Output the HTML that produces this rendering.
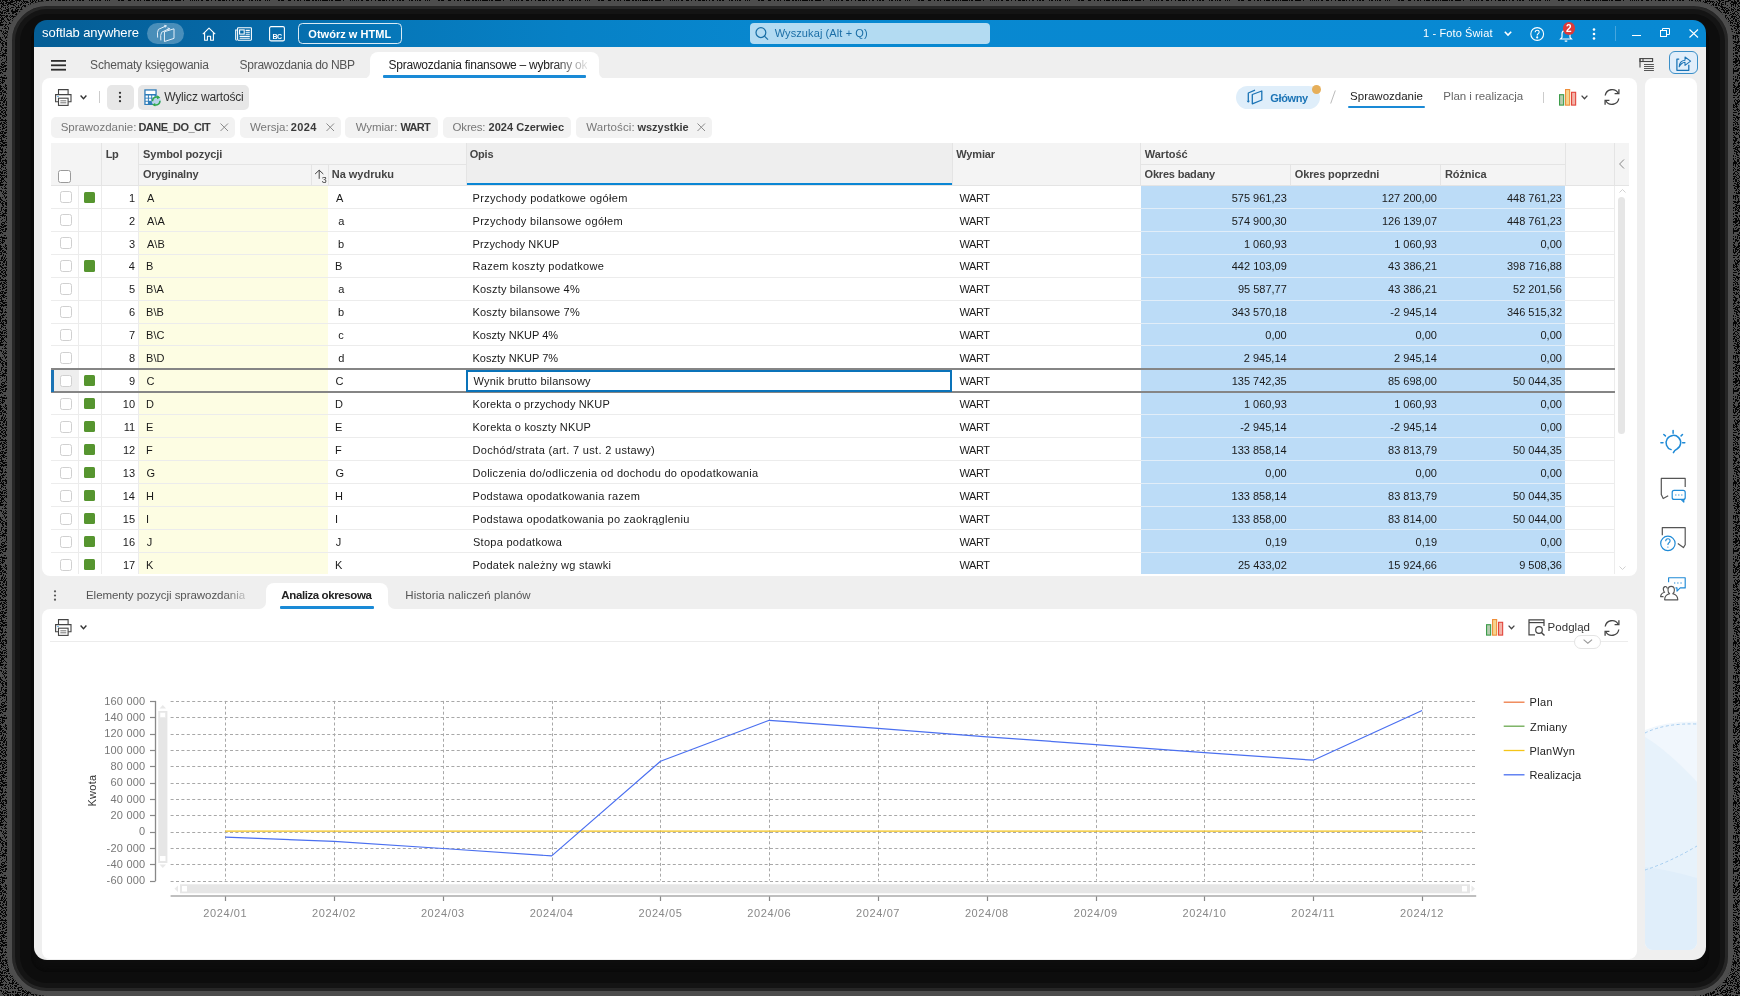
<!DOCTYPE html>
<html><head><meta charset="utf-8"><title>softlab anywhere</title>
<style>
*{box-sizing:border-box;margin:0;padding:0}
html,body{width:1740px;height:996px;overflow:hidden}
body{background:#050505;font-family:"Liberation Sans",sans-serif;position:relative;color:#222}
.a{position:absolute}
.t{position:absolute;white-space:pre}
svg{position:absolute;overflow:visible}
#ring{position:absolute;left:6.5px;top:0.5px;width:1726.5px;height:995.5px;border:5.8px solid #4d4d4d;border-radius:40px;background:#0d0d0d;box-shadow:inset 0 0 0 3px #262626, inset 0 0 0 8px #141414, inset 0 0 0 19px #0d0d0d, inset 0 0 6px 20px #080808}
#win{position:absolute;left:0;top:0;width:1740px;height:996px;will-change:transform;clip-path:inset(20px 34px 36px 34px round 13px);background:#efefef}
#title{position:absolute;left:34px;top:20px;width:1672px;height:27px;background:linear-gradient(90deg,#055e96 0%,#0668a6 12%,#0678ba 22%,#0781c6 32%,#0888d0 45%,#0889d3 100%)}
.panel{position:absolute;background:#fff;border-radius:8px}
.chip{position:absolute;top:117px;height:20.5px;background:#f2f2f2;border-radius:5px}
</style></head><body>
<svg style="left:0;top:0" width="1740" height="996"><filter id="nz" x="0" y="0" width="100%" height="100%" color-interpolation-filters="sRGB"><feTurbulence type="fractalNoise" baseFrequency="1.6" numOctaves="1" seed="7"/><feColorMatrix type="matrix" values="0 0 0 0 0.302 0 0 0 0 0.302 0 0 0 0 0.302 1 0 0 0 0"/><feComponentTransfer><feFuncA type="discrete" tableValues="0 0 1 1"/></feComponentTransfer></filter><rect x="0" y="0" width="1740" height="996" filter="url(#nz)"/></svg>
<div id="ring"></div>
<div id="win">

<div id="title"></div>
<div class="t" style="left:42.10px;top:24.60px;font-size:13px;line-height:16px;color:#fff;letter-spacing:-0.097px">softlab anywhere</div>
<div class="a" style="left:147px;top:23px;width:37px;height:21px;border-radius:11px;background:rgba(255,255,255,0.27)"></div>
<svg style="left:156px;top:25px" width="19" height="17" viewBox="0 0 19 17" fill="none" stroke="#e3eef8" stroke-width="1" stroke-linejoin="round" stroke-linecap="round">
<path d="M1.6 12.2 Q0.9 7 2.4 4.4 L10 0.9"/><path d="M8.6 0.4 L10.3 0.8 L9.4 2.2"/><path d="M4.8 15 Q4.1 9.6 5.6 7.3 L13.3 3.6"/><path d="M11.9 3.1 L13.6 3.5 L12.7 4.9"/><path d="M8.8 6.6 L18 3.8 V13.4 L8.8 16.4 Z"/></svg>
<svg style="left:202px;top:27px" width="14" height="14" viewBox="0 0 14 14" fill="none" stroke="#fff" stroke-width="1.1" stroke-linejoin="round">
<path d="M0.8 7.2 L7 1.1 L13.2 7.2"/><path d="M2.6 5.6 V13.2 H5.4 V9.2 H8.6 V13.2 H11.4 V5.6"/></svg>
<svg style="left:235px;top:27px" width="17" height="14" viewBox="0 0 17 14" fill="none" stroke="#fff" stroke-width="1.1">
<rect x="2.6" y="0.7" width="13.8" height="12.5" rx="0.6"/><path d="M2.6 3 H0.7 V12.3 Q0.7 13.2 1.8 13.2"/><rect x="4.6" y="2.9" width="4.6" height="4.2"/><path d="M10.6 3.4 H14.8 M10.6 5.3 H14.8 M10.6 7.2 H14.8 M4.6 9.4 H14.8 M4.6 11.2 H14.8"/></svg>
<svg style="left:269px;top:26.3px" width="16" height="15.5" viewBox="0 0 16 15.5" fill="none" stroke="#fff" stroke-width="1.1">
<rect x="0.6" y="0.6" width="14.8" height="14.3" rx="1.5"/></svg>
<div class="t" style="left:272.45px;top:31.50px;font-size:7px;line-height:9px;color:#fff;font-weight:700;letter-spacing:-0.405px">BC</div>
<div class="a" style="left:298px;top:22.8px;width:104px;height:21.5px;border:1.3px solid rgba(255,255,255,0.85);border-radius:4.5px"></div>
<div class="t" style="left:308.35px;top:27.00px;font-size:11px;line-height:14px;color:#fff;font-weight:700;letter-spacing:0.023px">Otwórz w HTML</div>
<div class="a" style="left:749.7px;top:22.5px;width:240px;height:21.7px;border-radius:4px;background:#b3dbf2"></div>
<svg style="left:755px;top:27px" width="14" height="13" viewBox="0 0 14 13" fill="none" stroke="#1a6fa6" stroke-width="1.25">
<circle cx="5.9" cy="5.6" r="4.9"/><path d="M9.4 9.1 L13 12.6"/></svg>
<div class="t" style="left:774.70px;top:26.10px;font-size:11px;line-height:14px;color:#1b6ea6;letter-spacing:0.099px">Wyszukaj (Alt + Q)</div>
<div class="t" style="left:1423.00px;top:26.00px;font-size:11px;line-height:14px;color:#fff;letter-spacing:0.123px">1 - Foto Świat</div>
<svg style="left:1504.3px;top:30.5px" width="8" height="5" viewBox="0 0 8 5" fill="none" stroke="#fff" stroke-width="1.6"><path d="M0.8 0.8 L4 4 L7.2 0.8"/></svg>
<svg style="left:1530px;top:27px" width="14.5" height="14" viewBox="0 0 14.5 14" fill="none" stroke="#fff" stroke-width="1.1">
<circle cx="7.2" cy="7" r="6.4"/><path d="M5.2 5.3 Q5.2 3.3 7.2 3.3 Q9.2 3.3 9.2 5.1 Q9.2 6.3 7.9 6.9 Q7.2 7.3 7.2 8.5"/><circle cx="7.2" cy="10.4" r="0.5" fill="#fff"/></svg>
<svg style="left:1558.5px;top:28px" width="14" height="14" viewBox="0 0 14 14" fill="none" stroke="#fff" stroke-width="1.2">
<path d="M1.5 11 H12.5 L11 9.3 V6 Q11 2.4 7 2.4 Q3 2.4 3 6 V9.3 Z"/><path d="M5.8 12.6 Q7 13.9 8.2 12.6"/></svg>
<div class="a" style="left:1562.7px;top:22px;width:12.6px;height:12.6px;border-radius:50%;background:#db3a3a"></div>
<div class="t" style="left:1566.10px;top:23.20px;font-size:10px;line-height:12px;color:#fff;font-weight:700">2</div>
<svg style="left:1592px;top:28px" width="4" height="12" viewBox="0 0 4 12" fill="#fff"><circle cx="2" cy="1.5" r="1.3"/><circle cx="2" cy="6" r="1.3"/><circle cx="2" cy="10.5" r="1.3"/></svg>
<div class="a" style="left:1614.5px;top:26px;width:1px;height:15px;background:rgba(255,255,255,0.25)"></div>
<div class="a" style="left:1631.5px;top:34.6px;width:9.5px;height:1.2px;background:#fff"></div>
<svg style="left:1660px;top:28px" width="10" height="9" viewBox="0 0 10 9" fill="none" stroke="#fff" stroke-width="1"><rect x="0.5" y="2.5" width="6" height="6"/><path d="M2.5 2.5 V0.5 H9.5 V6.5 H6.5"/></svg>
<svg style="left:1688.5px;top:28.5px" width="9.5" height="9" viewBox="0 0 9.5 9" fill="none" stroke="#fff" stroke-width="1.1"><path d="M0.5 0.5 L9 8.5 M9 0.5 L0.5 8.5"/></svg>
<svg style="left:50.5px;top:59.5px" width="15" height="11" viewBox="0 0 15 11" fill="#2e2e2e"><rect x="0" y="0" width="15" height="1.8"/><rect x="0" y="4.4" width="15" height="1.8"/><rect x="0" y="8.8" width="15" height="1.8"/></svg>
<div class="t" style="left:90.10px;top:58.30px;font-size:12px;line-height:15px;color:#555;letter-spacing:-0.203px">Schematy księgowania</div>
<div class="t" style="left:239.60px;top:58.30px;font-size:12px;line-height:15px;color:#555;letter-spacing:-0.296px">Sprawozdania do NBP</div>
<div class="a" style="left:362px;top:70px;width:245px;height:9px;background:#fff"></div>
<div class="a" style="left:360px;top:68px;width:10px;height:10.5px;background:#efefef;border-radius:0 0 7px 0"></div>
<div class="a" style="left:599px;top:68px;width:10px;height:10.5px;background:#efefef;border-radius:0 0 0 7px"></div>
<div class="a" style="left:370px;top:52.2px;width:229px;height:26px;background:#fff;border-radius:8px 8px 0 0"></div>
<div class="t" style="left:388.60px;top:58.30px;font-size:12px;line-height:15px;color:#222;width:198px;overflow:hidden;letter-spacing:-0.25px;-webkit-mask-image:linear-gradient(90deg,#000 83%,rgba(0,0,0,0.12) 100%)">Sprawozdania finansowe – wybrany okres</div>
<div class="a" style="left:383.3px;top:75.2px;width:203px;height:2.4px;background:#1a8ad6;border-radius:1px"></div>
<svg style="left:1639px;top:57px" width="16" height="15" viewBox="0 0 16 15" fill="none" stroke="#444" stroke-width="1.1">
<path d="M1 1.3 V10.4"/><rect x="1" y="1.6" width="12.6" height="2.9"/><path d="M4 1.6 V4.5"/><path d="M5 7.5 H14.9 M5 9.5 H14.9 M5 11.5 H14.9 M5 13.5 H14.9" stroke="#555" stroke-width="1"/></svg>
<div class="a" style="left:1669px;top:51.2px;width:28.6px;height:23.3px;border:1.2px solid #3b8fc8;border-radius:6px;background:#e1eefa"></div>
<svg style="left:1676px;top:56px" width="16" height="16" viewBox="0 0 16 16" fill="none" stroke="#1a73b5" stroke-width="1.25" stroke-linejoin="round">
<path d="M3.2 3 H0.9 V14.3 H12.8 V8.7"/><path d="M3.2 10.8 Q3.5 4.8 9 4.3 L9 1 L14.6 5.2 L9 9.4 L9 6.3 Q5.5 6.5 3.2 10.8 Z" stroke-width="1.05"/></svg>
<div class="panel" style="left:42px;top:78px;width:1595px;height:498px"></div>
<svg style="left:54.8px;top:88.7px" width="17" height="17" viewBox="0 0 17 17" fill="none" stroke="#444" stroke-width="1.1">
<path d="M3.5 5.5 V0.6 H13.1 V5.5"/><path d="M3.5 12.8 H0.6 V5.6 H16 V12.8 H13.1"/><rect x="3.5" y="9.2" width="9.6" height="7.2" fill="#fff"/><path d="M5.3 11.8 H11.3 M5.3 13.8 H11.3" stroke="#666" stroke-width="0.9"/><path d="M2.4 7.5 H3.6" stroke="#2a8ad6" stroke-width="1.1"/></svg>
<svg style="left:80px;top:95px" width="7" height="4.5" viewBox="0 0 7 4.5" fill="none" stroke="#333" stroke-width="1.4"><path d="M0.6 0.6 L3.5 3.7 L6.4 0.6"/></svg>
<div class="a" style="left:99px;top:91px;width:1px;height:12px;background:#ccc"></div>
<div class="a" style="left:107px;top:85px;width:27px;height:24.5px;border-radius:5px;background:#e7e7e7"></div>
<svg style="left:118.1px;top:90.8px" width="4" height="12" viewBox="0 0 4 12" fill="#333"><circle cx="2" cy="1.8" r="1.15"/><circle cx="2" cy="6" r="1.15"/><circle cx="2" cy="10.2" r="1.15"/></svg>
<div class="a" style="left:138px;top:85px;width:111px;height:24.5px;border-radius:5px;background:#e7e7e7"></div>
<svg style="left:144px;top:88.6px" width="18" height="17" viewBox="0 0 18 17" fill="none">
<rect x="0.3" y="0.3" width="12.4" height="15.7" fill="#2f7db9"/><rect x="1.6" y="1.6" width="9.8" height="3.4" fill="#fff"/>
<rect x="1.6" y="6.5" width="2.3" height="2.2" fill="#fff"/><rect x="4.9" y="6.5" width="2.3" height="2.2" fill="#fff"/><rect x="8.2" y="6.5" width="2.3" height="2.2" fill="#fff"/>
<rect x="1.6" y="9.6" width="2.3" height="2.2" fill="#fff"/><rect x="1.6" y="12.7" width="2.3" height="2.2" fill="#fff"/><rect x="4.9" y="9.6" width="2.3" height="2.2" fill="#fff"/>
<circle cx="12.2" cy="12" r="4.6" fill="#b9d3ea"/>
<path d="M8.5 12.2 Q8.6 8.3 12.4 7.9 L14.4 8.1" stroke="#2fa84a" stroke-width="1.5"/><path d="M13.2 6.2 L16.3 8.4 L13 10.3Z" fill="#2fa84a"/><path d="M16 11.8 Q15.8 15.8 12 16.1 L10 15.9" stroke="#2fa84a" stroke-width="1.5"/><path d="M11.2 14 L8 15.8 L11.3 17.5Z" fill="#2fa84a"/></svg>
<div class="t" style="left:164.15px;top:90.30px;font-size:12px;line-height:15px;color:#333;letter-spacing:-0.163px">Wylicz wartości</div>
<div class="a" style="left:1236px;top:85.8px;width:83.5px;height:23.2px;border-radius:12px;background:#dfeefa"></div>
<svg style="left:1247px;top:89px" width="16" height="16" viewBox="0 0 16 16" fill="none" stroke="#1a73b5" stroke-width="1.3" stroke-linejoin="round">
<path d="M1.3 13 V4 L8 1.2"/><path d="M0.3 11.8 L1.3 13.3 L2.4 11.8" stroke-width="1"/><path d="M5.3 5.5 L14.8 2 V11 L5.3 14.8 Z"/></svg>
<div class="t" style="left:1270.35px;top:91.00px;font-size:11px;line-height:14px;color:#1a73b5;font-weight:700;letter-spacing:-0.371px">Główny</div>
<div class="a" style="left:1311.7px;top:84.9px;width:9px;height:9px;border-radius:50%;background:#e6af5a"></div>
<svg style="left:1330px;top:90px" width="6" height="14" viewBox="0 0 6 14" fill="none" stroke="#bbb" stroke-width="1"><path d="M5.3 0.5 L0.7 13.5"/></svg>
<div class="t" style="left:1350.10px;top:88.90px;font-size:11.5px;line-height:14px;color:#222;letter-spacing:-0.008px">Sprawozdanie</div>
<div class="a" style="left:1348.2px;top:105.8px;width:76.5px;height:2.5px;background:#1a8ad6;border-radius:1px"></div>
<div class="t" style="left:1443.30px;top:88.90px;font-size:11.5px;line-height:14px;color:#666;letter-spacing:-0.046px">Plan i realizacja</div>
<div class="a" style="left:1542.5px;top:91.5px;width:1px;height:11.5px;background:#ccc"></div>
<svg style="left:1559px;top:89px" width="17" height="17" viewBox="0 0 17 17" fill="none" stroke-width="1.1">
<rect x="0.55" y="5.7" width="4.1" height="10.4" stroke="#3c9c4a" fill="#b5cdb0"/><rect x="6.55" y="0.55" width="4.1" height="15.6" stroke="#ef8f3a" fill="#f5d48e"/><rect x="12.55" y="3.3" width="4.1" height="12.8" stroke="#e2453b" fill="#f3b3a8"/></svg>
<svg style="left:1581px;top:95px" width="7" height="4.5" viewBox="0 0 7 4.5" fill="none" stroke="#444" stroke-width="1.3"><path d="M0.6 0.6 L3.5 3.7 L6.4 0.6"/></svg>
<svg style="left:1603px;top:88px" width="18" height="18" viewBox="0 0 18 18" fill="none" stroke="#444" stroke-width="1.3">
<path d="M2.2 7.5 A7 7 0 0 1 15.2 5.2"/><path d="M15.9 1.2 V5.6 H11.6"/><path d="M15.8 10.5 A7 7 0 0 1 2.8 12.8"/><path d="M2.1 16.8 V12.4 H6.4"/></svg>
<div class="chip" style="left:50.9px;width:183.9px"></div>
<div class="t" style="left:60.70px;top:120.40px;font-size:11.5px;line-height:14px;color:#777;letter-spacing:-0.036px">Sprawozdanie:</div>
<div class="t" style="left:138.40px;top:120.40px;font-size:11px;line-height:14px;color:#3a3a3a;font-weight:700;letter-spacing:-0.525px">DANE_DO_CIT</div>
<svg style="left:219.8px;top:123.3px" width="8.5" height="8.5" viewBox="0 0 8.5 8.5" fill="none" stroke="#8a8a8a" stroke-width="1"><path d="M0.5 0.5 L8 8 M8 0.5 L0.5 8"/></svg>
<div class="chip" style="left:239.9px;width:100.70000000000002px"></div>
<div class="t" style="left:249.95px;top:120.40px;font-size:11.5px;line-height:14px;color:#777;letter-spacing:-0.012px">Wersja:</div>
<div class="t" style="left:290.65px;top:120.40px;font-size:11px;line-height:14px;color:#3a3a3a;font-weight:700;letter-spacing:0.432px">2024</div>
<svg style="left:325.5px;top:123.3px" width="8.5" height="8.5" viewBox="0 0 8.5 8.5" fill="none" stroke="#8a8a8a" stroke-width="1"><path d="M0.5 0.5 L8 8 M8 0.5 L0.5 8"/></svg>
<div class="chip" style="left:344.8px;width:93.5px"></div>
<div class="t" style="left:355.65px;top:120.40px;font-size:11.5px;line-height:14px;color:#777;letter-spacing:-0.061px">Wymiar:</div>
<div class="t" style="left:400.50px;top:120.40px;font-size:11px;line-height:14px;color:#3a3a3a;font-weight:700;letter-spacing:-0.738px">WART</div>
<div class="chip" style="left:442.6px;width:128.39999999999998px"></div>
<div class="t" style="left:452.60px;top:120.40px;font-size:11.5px;line-height:14px;color:#777;letter-spacing:-0.184px">Okres:</div>
<div class="t" style="left:488.55px;top:120.40px;font-size:11px;line-height:14px;color:#3a3a3a;font-weight:700;letter-spacing:0.029px">2024 Czerwiec</div>
<div class="chip" style="left:575.8px;width:136.5px"></div>
<div class="t" style="left:586.25px;top:120.40px;font-size:11.5px;line-height:14px;color:#777;letter-spacing:0.125px">Wartości:</div>
<div class="t" style="left:637.45px;top:120.40px;font-size:11px;line-height:14px;color:#3a3a3a;font-weight:700;letter-spacing:-0.018px">wszystkie</div>
<svg style="left:697px;top:123.3px" width="8.5" height="8.5" viewBox="0 0 8.5 8.5" fill="none" stroke="#8a8a8a" stroke-width="1"><path d="M0.5 0.5 L8 8 M8 0.5 L0.5 8"/></svg>
<div class="a" style="left:50.5px;top:143.4px;width:1578.3px;height:42.099999999999994px;background:#f4f4f4"></div>
<div class="a" style="left:466px;top:143.4px;width:486.3px;height:42.099999999999994px;background:#eeeeee"></div>
<div class="a" style="left:466px;top:182.9px;width:486.3px;height:2.4px;background:#0a86d4"></div>
<div class="a" style="left:50.5px;top:185.0px;width:1578.3px;height:1px;background:#e4e4e4"></div>
<div class="a" style="left:100.9px;top:143.4px;width:1px;height:42.099999999999994px;background:#e4e4e4"></div>
<div class="a" style="left:137.9px;top:143.4px;width:1px;height:42.099999999999994px;background:#e4e4e4"></div>
<div class="a" style="left:465.5px;top:143.4px;width:1px;height:42.099999999999994px;background:#e4e4e4"></div>
<div class="a" style="left:951.8px;top:143.4px;width:1px;height:42.099999999999994px;background:#e4e4e4"></div>
<div class="a" style="left:1140.2px;top:143.4px;width:1px;height:42.099999999999994px;background:#e4e4e4"></div>
<div class="a" style="left:1565.0px;top:143.4px;width:1px;height:42.099999999999994px;background:#e4e4e4"></div>
<div class="a" style="left:1614.0px;top:143.4px;width:1px;height:42.099999999999994px;background:#e4e4e4"></div>
<div class="a" style="left:310.5px;top:164.4px;width:1px;height:21.099999999999994px;background:#e4e4e4"></div>
<div class="a" style="left:327.8px;top:164.4px;width:1px;height:21.099999999999994px;background:#e4e4e4"></div>
<div class="a" style="left:1289.8px;top:164.4px;width:1px;height:21.099999999999994px;background:#e4e4e4"></div>
<div class="a" style="left:1440.3px;top:164.4px;width:1px;height:21.099999999999994px;background:#e4e4e4"></div>
<div class="a" style="left:138.4px;top:163.9px;width:327.6px;height:1px;background:#e4e4e4"></div>
<div class="a" style="left:1140.7px;top:163.9px;width:424.79999999999995px;height:1px;background:#e4e4e4"></div>
<div class="a" style="left:58px;top:170.2px;width:12.5px;height:12.5px;border:1px solid #9a9a9a;border-radius:2.5px;background:#fff"></div>
<div class="t" style="left:105.70px;top:146.70px;font-size:11px;line-height:14px;color:#444;font-weight:700;letter-spacing:-0.419px">Lp</div>
<div class="t" style="left:143.10px;top:146.70px;font-size:11px;line-height:14px;color:#444;font-weight:700;letter-spacing:-0.063px">Symbol pozycji</div>
<div class="t" style="left:469.65px;top:146.70px;font-size:11px;line-height:14px;color:#444;font-weight:700;letter-spacing:-0.194px">Opis</div>
<div class="t" style="left:956.30px;top:146.70px;font-size:11px;line-height:14px;color:#444;font-weight:700;letter-spacing:-0.161px">Wymiar</div>
<div class="t" style="left:1144.80px;top:146.70px;font-size:11px;line-height:14px;color:#444;font-weight:700;letter-spacing:-0.012px">Wartość</div>
<div class="t" style="left:142.95px;top:166.80px;font-size:11px;line-height:14px;color:#444;font-weight:700;letter-spacing:-0.199px">Oryginalny</div>
<div class="t" style="left:331.70px;top:166.80px;font-size:11px;line-height:14px;color:#444;font-weight:700">Na wydruku</div>
<div class="t" style="left:1144.55px;top:166.80px;font-size:11px;line-height:14px;color:#444;font-weight:700;letter-spacing:-0.190px">Okres badany</div>
<div class="t" style="left:1294.85px;top:166.80px;font-size:11px;line-height:14px;color:#444;font-weight:700;letter-spacing:-0.164px">Okres poprzedni</div>
<div class="t" style="left:1444.90px;top:166.80px;font-size:11px;line-height:14px;color:#444;font-weight:700;letter-spacing:-0.076px">Różnica</div>
<svg style="left:314px;top:168.5px" width="14" height="15" viewBox="0 0 14 15" fill="none" stroke="#3a3a3a" stroke-width="0.95"><path d="M5.2 9.8 V1.2 M1.1 5 L5.2 1.2 L9.3 5"/></svg>
<div class="t" style="left:321.70px;top:175.00px;font-size:9px;line-height:11px;color:#3a3a3a">3</div>
<svg style="left:1618.8px;top:159px" width="5.5" height="10" viewBox="0 0 5.5 10" fill="none" stroke="#888" stroke-width="1"><path d="M5 0.5 L0.6 5 L5 9.5"/></svg>
<div class="a" style="left:139px;top:185.5px;width:189.3px;height:388.79999999999995px;background:#fdfde3"></div>
<div class="a" style="left:1140.7px;top:185.5px;width:424.8px;height:388.79999999999995px;background:#bcdcf7"></div>
<div class="a" style="left:78.1px;top:185.5px;width:1px;height:388.79999999999995px;background:#ececec"></div>
<div class="a" style="left:100.9px;top:185.5px;width:1px;height:388.79999999999995px;background:#ececec"></div>
<div class="a" style="left:137.9px;top:185.5px;width:1px;height:388.79999999999995px;background:#ececec"></div>
<div class="a" style="left:1614.0px;top:185.5px;width:1px;height:388.79999999999995px;background:#ececec"></div>
<div class="a" style="left:50.5px;top:207.75px;width:1564px;height:1px;background:#ececec"></div>
<div class="a" style="left:1140.7px;top:207.75px;width:424.8px;height:1px;background:#e1edf8"></div>
<div class="a" style="left:59.6px;top:191.3px;width:12.2px;height:12.2px;border:1px solid #d0d0d0;border-radius:2.5px;background:#fff"></div>
<div class="a" style="left:84px;top:191.5px;width:11.2px;height:11.2px;border-radius:1.5px;background:#56952f"></div>
<div class="t" style="left:129.00px;top:190.60px;font-size:11px;line-height:14px;color:#1a1a1a">1</div>
<div class="t" style="left:147.00px;top:190.60px;font-size:11px;line-height:14px;color:#1a1a1a">A</div>
<div class="t" style="left:336.00px;top:190.60px;font-size:11px;line-height:14px;color:#1a1a1a">A</div>
<div class="t" style="left:472.50px;top:190.60px;font-size:11px;line-height:14px;color:#1a1a1a;letter-spacing:0.323px">Przychody podatkowe ogółem</div>
<div class="t" style="left:959.60px;top:190.60px;font-size:11px;line-height:14px;color:#1a1a1a;letter-spacing:-0.485px">WART</div>
<div class="t" style="left:1231.71px;top:190.60px;font-size:11px;line-height:14px;color:#1a1a1a">575 961,23</div>
<div class="t" style="left:1381.86px;top:190.60px;font-size:11px;line-height:14px;color:#1a1a1a">127 200,00</div>
<div class="t" style="left:1506.91px;top:190.60px;font-size:11px;line-height:14px;color:#1a1a1a">448 761,23</div>
<div class="a" style="left:50.5px;top:230.7px;width:1564px;height:1px;background:#ececec"></div>
<div class="a" style="left:1140.7px;top:230.7px;width:424.8px;height:1px;background:#e1edf8"></div>
<div class="a" style="left:59.6px;top:214.25px;width:12.2px;height:12.2px;border:1px solid #d0d0d0;border-radius:2.5px;background:#fff"></div>
<div class="t" style="left:129.00px;top:213.55px;font-size:11px;line-height:14px;color:#1a1a1a">2</div>
<div class="t" style="left:147.00px;top:213.55px;font-size:11px;line-height:14px;color:#1a1a1a">A\A</div>
<div class="t" style="left:335.29px;top:213.55px;font-size:11px;line-height:14px;color:#1a1a1a"> a</div>
<div class="t" style="left:472.50px;top:213.55px;font-size:11px;line-height:14px;color:#1a1a1a;letter-spacing:0.310px">Przychody bilansowe ogółem</div>
<div class="t" style="left:959.60px;top:213.55px;font-size:11px;line-height:14px;color:#1a1a1a;letter-spacing:-0.485px">WART</div>
<div class="t" style="left:1231.66px;top:213.55px;font-size:11px;line-height:14px;color:#1a1a1a">574 900,30</div>
<div class="t" style="left:1381.96px;top:213.55px;font-size:11px;line-height:14px;color:#1a1a1a">126 139,07</div>
<div class="t" style="left:1506.91px;top:213.55px;font-size:11px;line-height:14px;color:#1a1a1a">448 761,23</div>
<div class="a" style="left:50.5px;top:253.65px;width:1564px;height:1px;background:#ececec"></div>
<div class="a" style="left:1140.7px;top:253.65px;width:424.8px;height:1px;background:#e1edf8"></div>
<div class="a" style="left:59.6px;top:237.20000000000002px;width:12.2px;height:12.2px;border:1px solid #d0d0d0;border-radius:2.5px;background:#fff"></div>
<div class="t" style="left:128.95px;top:236.50px;font-size:11px;line-height:14px;color:#1a1a1a">3</div>
<div class="t" style="left:147.00px;top:236.50px;font-size:11px;line-height:14px;color:#1a1a1a">A\B</div>
<div class="t" style="left:335.04px;top:236.50px;font-size:11px;line-height:14px;color:#1a1a1a"> b</div>
<div class="t" style="left:472.50px;top:236.50px;font-size:11px;line-height:14px;color:#1a1a1a;letter-spacing:0.144px">Przychody NKUP</div>
<div class="t" style="left:959.60px;top:236.50px;font-size:11px;line-height:14px;color:#1a1a1a;letter-spacing:-0.485px">WART</div>
<div class="t" style="left:1243.95px;top:236.50px;font-size:11px;line-height:14px;color:#1a1a1a">1 060,93</div>
<div class="t" style="left:1394.15px;top:236.50px;font-size:11px;line-height:14px;color:#1a1a1a">1 060,93</div>
<div class="t" style="left:1540.51px;top:236.50px;font-size:11px;line-height:14px;color:#1a1a1a">0,00</div>
<div class="a" style="left:50.5px;top:276.6px;width:1564px;height:1px;background:#ececec"></div>
<div class="a" style="left:1140.7px;top:276.6px;width:424.8px;height:1px;background:#e1edf8"></div>
<div class="a" style="left:59.6px;top:260.15px;width:12.2px;height:12.2px;border:1px solid #d0d0d0;border-radius:2.5px;background:#fff"></div>
<div class="a" style="left:84px;top:260.35px;width:11.2px;height:11.2px;border-radius:1.5px;background:#56952f"></div>
<div class="t" style="left:128.80px;top:259.45px;font-size:11px;line-height:14px;color:#1a1a1a">4</div>
<div class="t" style="left:146.10px;top:259.45px;font-size:11px;line-height:14px;color:#1a1a1a">B</div>
<div class="t" style="left:335.10px;top:259.45px;font-size:11px;line-height:14px;color:#1a1a1a">B</div>
<div class="t" style="left:472.50px;top:259.45px;font-size:11px;line-height:14px;color:#1a1a1a;letter-spacing:0.287px">Razem koszty podatkowe</div>
<div class="t" style="left:959.60px;top:259.45px;font-size:11px;line-height:14px;color:#1a1a1a;letter-spacing:-0.485px">WART</div>
<div class="t" style="left:1231.76px;top:259.45px;font-size:11px;line-height:14px;color:#1a1a1a">442 103,09</div>
<div class="t" style="left:1388.08px;top:259.45px;font-size:11px;line-height:14px;color:#1a1a1a">43 386,21</div>
<div class="t" style="left:1506.91px;top:259.45px;font-size:11px;line-height:14px;color:#1a1a1a">398 716,88</div>
<div class="a" style="left:50.5px;top:299.55px;width:1564px;height:1px;background:#ececec"></div>
<div class="a" style="left:1140.7px;top:299.55px;width:424.8px;height:1px;background:#e1edf8"></div>
<div class="a" style="left:59.6px;top:283.1px;width:12.2px;height:12.2px;border:1px solid #d0d0d0;border-radius:2.5px;background:#fff"></div>
<div class="t" style="left:128.90px;top:282.40px;font-size:11px;line-height:14px;color:#1a1a1a">5</div>
<div class="t" style="left:146.10px;top:282.40px;font-size:11px;line-height:14px;color:#1a1a1a">B\A</div>
<div class="t" style="left:335.29px;top:282.40px;font-size:11px;line-height:14px;color:#1a1a1a"> a</div>
<div class="t" style="left:472.50px;top:282.40px;font-size:11px;line-height:14px;color:#1a1a1a;letter-spacing:0.180px">Koszty bilansowe 4%</div>
<div class="t" style="left:959.60px;top:282.40px;font-size:11px;line-height:14px;color:#1a1a1a;letter-spacing:-0.485px">WART</div>
<div class="t" style="left:1237.88px;top:282.40px;font-size:11px;line-height:14px;color:#1a1a1a">95 587,77</div>
<div class="t" style="left:1388.08px;top:282.40px;font-size:11px;line-height:14px;color:#1a1a1a">43 386,21</div>
<div class="t" style="left:1513.03px;top:282.40px;font-size:11px;line-height:14px;color:#1a1a1a">52 201,56</div>
<div class="a" style="left:50.5px;top:322.5px;width:1564px;height:1px;background:#ececec"></div>
<div class="a" style="left:1140.7px;top:322.5px;width:424.8px;height:1px;background:#e1edf8"></div>
<div class="a" style="left:59.6px;top:306.05px;width:12.2px;height:12.2px;border:1px solid #d0d0d0;border-radius:2.5px;background:#fff"></div>
<div class="t" style="left:128.95px;top:305.35px;font-size:11px;line-height:14px;color:#1a1a1a">6</div>
<div class="t" style="left:146.10px;top:305.35px;font-size:11px;line-height:14px;color:#1a1a1a">B\B</div>
<div class="t" style="left:335.04px;top:305.35px;font-size:11px;line-height:14px;color:#1a1a1a"> b</div>
<div class="t" style="left:472.50px;top:305.35px;font-size:11px;line-height:14px;color:#1a1a1a;letter-spacing:0.180px">Koszty bilansowe 7%</div>
<div class="t" style="left:959.60px;top:305.35px;font-size:11px;line-height:14px;color:#1a1a1a;letter-spacing:-0.485px">WART</div>
<div class="t" style="left:1231.71px;top:305.35px;font-size:11px;line-height:14px;color:#1a1a1a">343 570,18</div>
<div class="t" style="left:1390.34px;top:305.35px;font-size:11px;line-height:14px;color:#1a1a1a">-2 945,14</div>
<div class="t" style="left:1506.96px;top:305.35px;font-size:11px;line-height:14px;color:#1a1a1a">346 515,32</div>
<div class="a" style="left:50.5px;top:345.45px;width:1564px;height:1px;background:#ececec"></div>
<div class="a" style="left:1140.7px;top:345.45px;width:424.8px;height:1px;background:#e1edf8"></div>
<div class="a" style="left:59.6px;top:329.0px;width:12.2px;height:12.2px;border:1px solid #d0d0d0;border-radius:2.5px;background:#fff"></div>
<div class="t" style="left:129.00px;top:328.30px;font-size:11px;line-height:14px;color:#1a1a1a">7</div>
<div class="t" style="left:146.10px;top:328.30px;font-size:11px;line-height:14px;color:#1a1a1a">B\C</div>
<div class="t" style="left:335.29px;top:328.30px;font-size:11px;line-height:14px;color:#1a1a1a"> c</div>
<div class="t" style="left:472.50px;top:328.30px;font-size:11px;line-height:14px;color:#1a1a1a;letter-spacing:0.015px">Koszty NKUP 4%</div>
<div class="t" style="left:959.60px;top:328.30px;font-size:11px;line-height:14px;color:#1a1a1a;letter-spacing:-0.485px">WART</div>
<div class="t" style="left:1265.31px;top:328.30px;font-size:11px;line-height:14px;color:#1a1a1a">0,00</div>
<div class="t" style="left:1415.51px;top:328.30px;font-size:11px;line-height:14px;color:#1a1a1a">0,00</div>
<div class="t" style="left:1540.51px;top:328.30px;font-size:11px;line-height:14px;color:#1a1a1a">0,00</div>
<div class="a" style="left:50.5px;top:368.4px;width:1564px;height:1px;background:#ececec"></div>
<div class="a" style="left:1140.7px;top:368.4px;width:424.8px;height:1px;background:#e1edf8"></div>
<div class="a" style="left:59.6px;top:351.95px;width:12.2px;height:12.2px;border:1px solid #d0d0d0;border-radius:2.5px;background:#fff"></div>
<div class="t" style="left:128.95px;top:351.25px;font-size:11px;line-height:14px;color:#1a1a1a">8</div>
<div class="t" style="left:146.10px;top:351.25px;font-size:11px;line-height:14px;color:#1a1a1a">B\D</div>
<div class="t" style="left:335.29px;top:351.25px;font-size:11px;line-height:14px;color:#1a1a1a"> d</div>
<div class="t" style="left:472.50px;top:351.25px;font-size:11px;line-height:14px;color:#1a1a1a;letter-spacing:0.015px">Koszty NKUP 7%</div>
<div class="t" style="left:959.60px;top:351.25px;font-size:11px;line-height:14px;color:#1a1a1a;letter-spacing:-0.485px">WART</div>
<div class="t" style="left:1243.80px;top:351.25px;font-size:11px;line-height:14px;color:#1a1a1a">2 945,14</div>
<div class="t" style="left:1394.00px;top:351.25px;font-size:11px;line-height:14px;color:#1a1a1a">2 945,14</div>
<div class="t" style="left:1540.51px;top:351.25px;font-size:11px;line-height:14px;color:#1a1a1a">0,00</div>
<div class="a" style="left:50.5px;top:391.35px;width:1564px;height:1px;background:#ececec"></div>
<div class="a" style="left:1140.7px;top:391.35px;width:424.8px;height:1px;background:#e1edf8"></div>
<div class="a" style="left:50.5px;top:369.1px;width:28px;height:22.95px;background:#eeeeee"></div>
<div class="a" style="left:59.6px;top:374.90000000000003px;width:12.2px;height:12.2px;border:1px solid #d0d0d0;border-radius:2.5px;background:#fff"></div>
<div class="a" style="left:84px;top:375.1px;width:11.2px;height:11.2px;border-radius:1.5px;background:#56952f"></div>
<div class="t" style="left:129.00px;top:374.20px;font-size:11px;line-height:14px;color:#1a1a1a">9</div>
<div class="t" style="left:146.45px;top:374.20px;font-size:11px;line-height:14px;color:#1a1a1a">C</div>
<div class="t" style="left:335.45px;top:374.20px;font-size:11px;line-height:14px;color:#1a1a1a">C</div>
<div class="t" style="left:473.40px;top:374.20px;font-size:11px;line-height:14px;color:#1a1a1a;letter-spacing:0.229px">Wynik brutto bilansowy</div>
<div class="t" style="left:959.60px;top:374.20px;font-size:11px;line-height:14px;color:#1a1a1a;letter-spacing:-0.485px">WART</div>
<div class="t" style="left:1231.66px;top:374.20px;font-size:11px;line-height:14px;color:#1a1a1a">135 742,35</div>
<div class="t" style="left:1387.98px;top:374.20px;font-size:11px;line-height:14px;color:#1a1a1a">85 698,00</div>
<div class="t" style="left:1512.98px;top:374.20px;font-size:11px;line-height:14px;color:#1a1a1a">50 044,35</div>
<div class="a" style="left:50.5px;top:414.29999999999995px;width:1564px;height:1px;background:#ececec"></div>
<div class="a" style="left:1140.7px;top:414.29999999999995px;width:424.8px;height:1px;background:#e1edf8"></div>
<div class="a" style="left:59.6px;top:397.84999999999997px;width:12.2px;height:12.2px;border:1px solid #d0d0d0;border-radius:2.5px;background:#fff"></div>
<div class="a" style="left:84px;top:398.04999999999995px;width:11.2px;height:11.2px;border-radius:1.5px;background:#56952f"></div>
<div class="t" style="left:122.78px;top:397.15px;font-size:11px;line-height:14px;color:#1a1a1a">10</div>
<div class="t" style="left:146.10px;top:397.15px;font-size:11px;line-height:14px;color:#1a1a1a">D</div>
<div class="t" style="left:335.10px;top:397.15px;font-size:11px;line-height:14px;color:#1a1a1a">D</div>
<div class="t" style="left:472.50px;top:397.15px;font-size:11px;line-height:14px;color:#1a1a1a;letter-spacing:0.145px">Korekta o przychody NKUP</div>
<div class="t" style="left:959.60px;top:397.15px;font-size:11px;line-height:14px;color:#1a1a1a;letter-spacing:-0.485px">WART</div>
<div class="t" style="left:1243.95px;top:397.15px;font-size:11px;line-height:14px;color:#1a1a1a">1 060,93</div>
<div class="t" style="left:1394.15px;top:397.15px;font-size:11px;line-height:14px;color:#1a1a1a">1 060,93</div>
<div class="t" style="left:1540.51px;top:397.15px;font-size:11px;line-height:14px;color:#1a1a1a">0,00</div>
<div class="a" style="left:50.5px;top:437.25px;width:1564px;height:1px;background:#ececec"></div>
<div class="a" style="left:1140.7px;top:437.25px;width:424.8px;height:1px;background:#e1edf8"></div>
<div class="a" style="left:59.6px;top:420.8px;width:12.2px;height:12.2px;border:1px solid #d0d0d0;border-radius:2.5px;background:#fff"></div>
<div class="a" style="left:84px;top:421.0px;width:11.2px;height:11.2px;border-radius:1.5px;background:#56952f"></div>
<div class="t" style="left:123.70px;top:420.10px;font-size:11px;line-height:14px;color:#1a1a1a">11</div>
<div class="t" style="left:146.10px;top:420.10px;font-size:11px;line-height:14px;color:#1a1a1a">E</div>
<div class="t" style="left:335.10px;top:420.10px;font-size:11px;line-height:14px;color:#1a1a1a">E</div>
<div class="t" style="left:472.50px;top:420.10px;font-size:11px;line-height:14px;color:#1a1a1a;letter-spacing:0.175px">Korekta o koszty NKUP</div>
<div class="t" style="left:959.60px;top:420.10px;font-size:11px;line-height:14px;color:#1a1a1a;letter-spacing:-0.485px">WART</div>
<div class="t" style="left:1240.14px;top:420.10px;font-size:11px;line-height:14px;color:#1a1a1a">-2 945,14</div>
<div class="t" style="left:1390.34px;top:420.10px;font-size:11px;line-height:14px;color:#1a1a1a">-2 945,14</div>
<div class="t" style="left:1540.51px;top:420.10px;font-size:11px;line-height:14px;color:#1a1a1a">0,00</div>
<div class="a" style="left:50.5px;top:460.2px;width:1564px;height:1px;background:#ececec"></div>
<div class="a" style="left:1140.7px;top:460.2px;width:424.8px;height:1px;background:#e1edf8"></div>
<div class="a" style="left:59.6px;top:443.75px;width:12.2px;height:12.2px;border:1px solid #d0d0d0;border-radius:2.5px;background:#fff"></div>
<div class="a" style="left:84px;top:443.95px;width:11.2px;height:11.2px;border-radius:1.5px;background:#56952f"></div>
<div class="t" style="left:122.88px;top:443.05px;font-size:11px;line-height:14px;color:#1a1a1a">12</div>
<div class="t" style="left:146.10px;top:443.05px;font-size:11px;line-height:14px;color:#1a1a1a">F</div>
<div class="t" style="left:335.10px;top:443.05px;font-size:11px;line-height:14px;color:#1a1a1a">F</div>
<div class="t" style="left:472.50px;top:443.05px;font-size:11px;line-height:14px;color:#1a1a1a;letter-spacing:0.317px">Dochód/strata (art. 7 ust. 2 ustawy)</div>
<div class="t" style="left:959.60px;top:443.05px;font-size:11px;line-height:14px;color:#1a1a1a;letter-spacing:-0.485px">WART</div>
<div class="t" style="left:1231.56px;top:443.05px;font-size:11px;line-height:14px;color:#1a1a1a">133 858,14</div>
<div class="t" style="left:1388.08px;top:443.05px;font-size:11px;line-height:14px;color:#1a1a1a">83 813,79</div>
<div class="t" style="left:1512.98px;top:443.05px;font-size:11px;line-height:14px;color:#1a1a1a">50 044,35</div>
<div class="a" style="left:50.5px;top:483.15px;width:1564px;height:1px;background:#ececec"></div>
<div class="a" style="left:1140.7px;top:483.15px;width:424.8px;height:1px;background:#e1edf8"></div>
<div class="a" style="left:59.6px;top:466.7px;width:12.2px;height:12.2px;border:1px solid #d0d0d0;border-radius:2.5px;background:#fff"></div>
<div class="a" style="left:84px;top:466.9px;width:11.2px;height:11.2px;border-radius:1.5px;background:#56952f"></div>
<div class="t" style="left:122.83px;top:466.00px;font-size:11px;line-height:14px;color:#1a1a1a">13</div>
<div class="t" style="left:146.45px;top:466.00px;font-size:11px;line-height:14px;color:#1a1a1a">G</div>
<div class="t" style="left:335.45px;top:466.00px;font-size:11px;line-height:14px;color:#1a1a1a">G</div>
<div class="t" style="left:472.50px;top:466.00px;font-size:11px;line-height:14px;color:#1a1a1a;letter-spacing:0.287px">Doliczenia do/odliczenia od dochodu do opodatkowania</div>
<div class="t" style="left:959.60px;top:466.00px;font-size:11px;line-height:14px;color:#1a1a1a;letter-spacing:-0.485px">WART</div>
<div class="t" style="left:1265.31px;top:466.00px;font-size:11px;line-height:14px;color:#1a1a1a">0,00</div>
<div class="t" style="left:1415.51px;top:466.00px;font-size:11px;line-height:14px;color:#1a1a1a">0,00</div>
<div class="t" style="left:1540.51px;top:466.00px;font-size:11px;line-height:14px;color:#1a1a1a">0,00</div>
<div class="a" style="left:50.5px;top:506.09999999999997px;width:1564px;height:1px;background:#ececec"></div>
<div class="a" style="left:1140.7px;top:506.09999999999997px;width:424.8px;height:1px;background:#e1edf8"></div>
<div class="a" style="left:59.6px;top:489.65px;width:12.2px;height:12.2px;border:1px solid #d0d0d0;border-radius:2.5px;background:#fff"></div>
<div class="a" style="left:84px;top:489.84999999999997px;width:11.2px;height:11.2px;border-radius:1.5px;background:#56952f"></div>
<div class="t" style="left:122.68px;top:488.95px;font-size:11px;line-height:14px;color:#1a1a1a">14</div>
<div class="t" style="left:146.10px;top:488.95px;font-size:11px;line-height:14px;color:#1a1a1a">H</div>
<div class="t" style="left:335.10px;top:488.95px;font-size:11px;line-height:14px;color:#1a1a1a">H</div>
<div class="t" style="left:472.50px;top:488.95px;font-size:11px;line-height:14px;color:#1a1a1a;letter-spacing:0.312px">Podstawa opodatkowania razem</div>
<div class="t" style="left:959.60px;top:488.95px;font-size:11px;line-height:14px;color:#1a1a1a;letter-spacing:-0.485px">WART</div>
<div class="t" style="left:1231.56px;top:488.95px;font-size:11px;line-height:14px;color:#1a1a1a">133 858,14</div>
<div class="t" style="left:1388.08px;top:488.95px;font-size:11px;line-height:14px;color:#1a1a1a">83 813,79</div>
<div class="t" style="left:1512.98px;top:488.95px;font-size:11px;line-height:14px;color:#1a1a1a">50 044,35</div>
<div class="a" style="left:50.5px;top:529.05px;width:1564px;height:1px;background:#ececec"></div>
<div class="a" style="left:1140.7px;top:529.05px;width:424.8px;height:1px;background:#e1edf8"></div>
<div class="a" style="left:59.6px;top:512.6px;width:12.2px;height:12.2px;border:1px solid #d0d0d0;border-radius:2.5px;background:#fff"></div>
<div class="a" style="left:84px;top:512.8px;width:11.2px;height:11.2px;border-radius:1.5px;background:#56952f"></div>
<div class="t" style="left:122.78px;top:511.90px;font-size:11px;line-height:14px;color:#1a1a1a">15</div>
<div class="t" style="left:146.00px;top:511.90px;font-size:11px;line-height:14px;color:#1a1a1a">I</div>
<div class="t" style="left:335.00px;top:511.90px;font-size:11px;line-height:14px;color:#1a1a1a">I</div>
<div class="t" style="left:472.50px;top:511.90px;font-size:11px;line-height:14px;color:#1a1a1a;letter-spacing:0.290px">Podstawa opodatkowania po zaokrągleniu</div>
<div class="t" style="left:959.60px;top:511.90px;font-size:11px;line-height:14px;color:#1a1a1a;letter-spacing:-0.485px">WART</div>
<div class="t" style="left:1231.66px;top:511.90px;font-size:11px;line-height:14px;color:#1a1a1a">133 858,00</div>
<div class="t" style="left:1387.98px;top:511.90px;font-size:11px;line-height:14px;color:#1a1a1a">83 814,00</div>
<div class="t" style="left:1512.98px;top:511.90px;font-size:11px;line-height:14px;color:#1a1a1a">50 044,00</div>
<div class="a" style="left:50.5px;top:552.0px;width:1564px;height:1px;background:#ececec"></div>
<div class="a" style="left:1140.7px;top:552.0px;width:424.8px;height:1px;background:#e1edf8"></div>
<div class="a" style="left:59.6px;top:535.55px;width:12.2px;height:12.2px;border:1px solid #d0d0d0;border-radius:2.5px;background:#fff"></div>
<div class="a" style="left:84px;top:535.75px;width:11.2px;height:11.2px;border-radius:1.5px;background:#56952f"></div>
<div class="t" style="left:122.83px;top:534.85px;font-size:11px;line-height:14px;color:#1a1a1a">16</div>
<div class="t" style="left:146.85px;top:534.85px;font-size:11px;line-height:14px;color:#1a1a1a">J</div>
<div class="t" style="left:335.85px;top:534.85px;font-size:11px;line-height:14px;color:#1a1a1a">J</div>
<div class="t" style="left:472.95px;top:534.85px;font-size:11px;line-height:14px;color:#1a1a1a;letter-spacing:0.286px">Stopa podatkowa</div>
<div class="t" style="left:959.60px;top:534.85px;font-size:11px;line-height:14px;color:#1a1a1a;letter-spacing:-0.485px">WART</div>
<div class="t" style="left:1265.41px;top:534.85px;font-size:11px;line-height:14px;color:#1a1a1a">0,19</div>
<div class="t" style="left:1415.61px;top:534.85px;font-size:11px;line-height:14px;color:#1a1a1a">0,19</div>
<div class="t" style="left:1540.51px;top:534.85px;font-size:11px;line-height:14px;color:#1a1a1a">0,00</div>
<div class="a" style="left:59.6px;top:558.5px;width:12.2px;height:12.2px;border:1px solid #d0d0d0;border-radius:2.5px;background:#fff"></div>
<div class="a" style="left:84px;top:558.7px;width:11.2px;height:11.2px;border-radius:1.5px;background:#56952f"></div>
<div class="t" style="left:122.88px;top:557.80px;font-size:11px;line-height:14px;color:#1a1a1a">17</div>
<div class="t" style="left:146.10px;top:557.80px;font-size:11px;line-height:14px;color:#1a1a1a">K</div>
<div class="t" style="left:335.10px;top:557.80px;font-size:11px;line-height:14px;color:#1a1a1a">K</div>
<div class="t" style="left:472.50px;top:557.80px;font-size:11px;line-height:14px;color:#1a1a1a;letter-spacing:0.264px">Podatek należny wg stawki</div>
<div class="t" style="left:959.60px;top:557.80px;font-size:11px;line-height:14px;color:#1a1a1a;letter-spacing:-0.485px">WART</div>
<div class="t" style="left:1237.88px;top:557.80px;font-size:11px;line-height:14px;color:#1a1a1a">25 433,02</div>
<div class="t" style="left:1388.03px;top:557.80px;font-size:11px;line-height:14px;color:#1a1a1a">15 924,66</div>
<div class="t" style="left:1519.15px;top:557.80px;font-size:11px;line-height:14px;color:#1a1a1a">9 508,36</div>
<div class="a" style="left:50.5px;top:368.20000000000005px;width:1564px;height:1.7px;background:#858585"></div>
<div class="a" style="left:50.5px;top:391.25px;width:1564px;height:1.7px;background:#858585"></div>
<div class="a" style="left:50.5px;top:369.6px;width:3px;height:21.95px;background:#1a73b5"></div>
<div class="a" style="left:466px;top:369.5px;width:486px;height:22.349999999999998px;border:2.2px solid #0a73b9"></div>
<svg style="left:1618.5px;top:189px" width="7" height="4" viewBox="0 0 7 4" fill="none" stroke="#ccc" stroke-width="0.9"><path d="M0.5 3.5 L3.5 0.5 L6.5 3.5"/></svg>
<div class="a" style="left:1618.3px;top:197.2px;width:7.2px;height:237px;border-radius:4px;background:#e6e6e6"></div>
<svg style="left:1618.5px;top:566px" width="7" height="4" viewBox="0 0 7 4" fill="none" stroke="#ccc" stroke-width="0.9"><path d="M0.5 0.5 L3.5 3.5 L6.5 0.5"/></svg>
<svg style="left:53px;top:590px" width="4" height="11" viewBox="0 0 4 11" fill="#555"><circle cx="2" cy="1.3" r="1.1"/><circle cx="2" cy="5.5" r="1.1"/><circle cx="2" cy="9.7" r="1.1"/></svg>
<div class="t" style="left:86.00px;top:588.10px;font-size:11.5px;line-height:14px;color:#555;letter-spacing:-0.05px;width:162px;overflow:hidden;-webkit-mask-image:linear-gradient(90deg,#000 85%,rgba(0,0,0,0.2) 100%)">Elementy pozycji sprawozdania</div>
<div class="a" style="left:258px;top:601px;width:138px;height:8px;background:#fff"></div>
<div class="a" style="left:256px;top:599px;width:10px;height:10px;background:#efefef;border-radius:0 0 7px 0"></div>
<div class="a" style="left:388.4px;top:599px;width:10px;height:10px;background:#efefef;border-radius:0 0 0 7px"></div>
<div class="a" style="left:266px;top:582.8px;width:122.4px;height:26.5px;background:#fff;border-radius:8px 8px 0 0"></div>
<div class="t" style="left:281.35px;top:588.10px;font-size:11.5px;line-height:14px;color:#222;font-weight:700;letter-spacing:-0.398px">Analiza okresowa</div>
<div class="a" style="left:280.3px;top:606.2px;width:93.5px;height:2.4px;background:#1a8ad6;border-radius:1px"></div>
<div class="t" style="left:405.30px;top:588.10px;font-size:11.5px;line-height:14px;color:#555;letter-spacing:0.059px">Historia naliczeń planów</div>
<div class="panel" style="left:42px;top:608.8px;width:1595px;height:350.4px"></div>
<svg style="left:55px;top:619px" width="17" height="17" viewBox="0 0 17 17" fill="none" stroke="#444" stroke-width="1.1">
<path d="M3.5 5.5 V0.6 H13.1 V5.5"/><path d="M3.5 12.8 H0.6 V5.6 H16 V12.8 H13.1"/><rect x="3.5" y="9.2" width="9.6" height="7.2" fill="#fff"/><path d="M5.3 11.8 H11.3 M5.3 13.8 H11.3" stroke="#666" stroke-width="0.9"/><path d="M2.4 7.5 H3.6" stroke="#2a8ad6" stroke-width="1.1"/></svg>
<svg style="left:80px;top:625.3px" width="7" height="4.5" viewBox="0 0 7 4.5" fill="none" stroke="#333" stroke-width="1.4"><path d="M0.6 0.6 L3.5 3.7 L6.4 0.6"/></svg>
<div class="a" style="left:50.3px;top:641.3px;width:1578px;height:1px;background:#ececec"></div>
<svg style="left:1486px;top:618.5px" width="17" height="17" viewBox="0 0 17 17" fill="none" stroke-width="1.1">
<rect x="0.55" y="5.7" width="4.1" height="10.4" stroke="#3c9c4a" fill="#b5cdb0"/><rect x="6.55" y="0.55" width="4.1" height="15.6" stroke="#ef8f3a" fill="#f5d48e"/><rect x="12.55" y="3.3" width="4.1" height="12.8" stroke="#e2453b" fill="#f3b3a8"/></svg>
<svg style="left:1508px;top:624.5px" width="7" height="4.5" viewBox="0 0 7 4.5" fill="none" stroke="#444" stroke-width="1.3"><path d="M0.6 0.6 L3.5 3.7 L6.4 0.6"/></svg>
<svg style="left:1527.5px;top:619px" width="18" height="17" viewBox="0 0 18 17" fill="none" stroke="#444" stroke-width="1.2">
<path d="M7 15.8 H1 V0.8 H16 V7"/><path d="M1 3.6 H16"/><circle cx="11" cy="11" r="3.3"/><path d="M13.4 13.4 L16.5 16.5" stroke-width="1.4"/></svg>
<div class="t" style="left:1547.60px;top:620.10px;font-size:11.5px;line-height:14px;color:#333;letter-spacing:0.032px">Podgląd</div>
<svg style="left:1603px;top:618.5px" width="18" height="18" viewBox="0 0 18 18" fill="none" stroke="#444" stroke-width="1.3">
<path d="M2.2 7.5 A7 7 0 0 1 15.2 5.2"/><path d="M15.9 1.2 V5.6 H11.6"/><path d="M15.8 10.5 A7 7 0 0 1 2.8 12.8"/><path d="M2.1 16.8 V12.4 H6.4"/></svg>
<div class="a" style="left:1574px;top:635.3px;width:27px;height:13.6px;border-radius:7px;background:#fff;border:1px solid #e4e4e4"></div>
<svg style="left:1582.6px;top:639.3px" width="9.7" height="5" viewBox="0 0 9.7 5" fill="none" stroke="#999" stroke-width="1.1"><path d="M0.6 0.6 L4.85 4.2 L9.1 0.6"/></svg>
<svg style="left:0;top:0" width="1740" height="996" viewBox="0 0 1740 996"><path d="M170.6 701.5 H1476.2" stroke="#a8a8a8" stroke-width="1" stroke-dasharray="3 2.4"/><path d="M150 701.5 H155.5" stroke="#888" stroke-width="1.2"/><path d="M170.6 717.5 H1476.2" stroke="#a8a8a8" stroke-width="1" stroke-dasharray="3 2.4"/><path d="M150 717.5 H155.5" stroke="#888" stroke-width="1.2"/><path d="M170.6 734.5 H1476.2" stroke="#a8a8a8" stroke-width="1" stroke-dasharray="3 2.4"/><path d="M150 734.5 H155.5" stroke="#888" stroke-width="1.2"/><path d="M170.6 750.5 H1476.2" stroke="#a8a8a8" stroke-width="1" stroke-dasharray="3 2.4"/><path d="M150 750.5 H155.5" stroke="#888" stroke-width="1.2"/><path d="M170.6 766.5 H1476.2" stroke="#a8a8a8" stroke-width="1" stroke-dasharray="3 2.4"/><path d="M150 766.5 H155.5" stroke="#888" stroke-width="1.2"/><path d="M170.6 783.5 H1476.2" stroke="#a8a8a8" stroke-width="1" stroke-dasharray="3 2.4"/><path d="M150 783.5 H155.5" stroke="#888" stroke-width="1.2"/><path d="M170.6 799.5 H1476.2" stroke="#a8a8a8" stroke-width="1" stroke-dasharray="3 2.4"/><path d="M150 799.5 H155.5" stroke="#888" stroke-width="1.2"/><path d="M170.6 815.5 H1476.2" stroke="#a8a8a8" stroke-width="1" stroke-dasharray="3 2.4"/><path d="M150 815.5 H155.5" stroke="#888" stroke-width="1.2"/><path d="M170.6 832.5 H1476.2" stroke="#a8a8a8" stroke-width="1" stroke-dasharray="3 2.4"/><path d="M150 832.5 H155.5" stroke="#888" stroke-width="1.2"/><path d="M170.6 848.5 H1476.2" stroke="#a8a8a8" stroke-width="1" stroke-dasharray="3 2.4"/><path d="M150 848.5 H155.5" stroke="#888" stroke-width="1.2"/><path d="M170.6 864.5 H1476.2" stroke="#a8a8a8" stroke-width="1" stroke-dasharray="3 2.4"/><path d="M150 864.5 H155.5" stroke="#888" stroke-width="1.2"/><path d="M170.6 881.5 H1476.2" stroke="#a8a8a8" stroke-width="1" stroke-dasharray="3 2.4"/><path d="M150 881.5 H155.5" stroke="#888" stroke-width="1.2"/><path d="M225.5 700.9 V880.53" stroke="#a8a8a8" stroke-width="1" stroke-dasharray="3 2.4"/><path d="M225.5 896 V901" stroke="#888" stroke-width="1.2"/><path d="M334.5 700.9 V880.53" stroke="#a8a8a8" stroke-width="1" stroke-dasharray="3 2.4"/><path d="M334.5 896 V901" stroke="#888" stroke-width="1.2"/><path d="M443.5 700.9 V880.53" stroke="#a8a8a8" stroke-width="1" stroke-dasharray="3 2.4"/><path d="M443.5 896 V901" stroke="#888" stroke-width="1.2"/><path d="M552.5 700.9 V880.53" stroke="#a8a8a8" stroke-width="1" stroke-dasharray="3 2.4"/><path d="M552.5 896 V901" stroke="#888" stroke-width="1.2"/><path d="M660.5 700.9 V880.53" stroke="#a8a8a8" stroke-width="1" stroke-dasharray="3 2.4"/><path d="M660.5 896 V901" stroke="#888" stroke-width="1.2"/><path d="M769.5 700.9 V880.53" stroke="#a8a8a8" stroke-width="1" stroke-dasharray="3 2.4"/><path d="M769.5 896 V901" stroke="#888" stroke-width="1.2"/><path d="M878.5 700.9 V880.53" stroke="#a8a8a8" stroke-width="1" stroke-dasharray="3 2.4"/><path d="M878.5 896 V901" stroke="#888" stroke-width="1.2"/><path d="M987.5 700.9 V880.53" stroke="#a8a8a8" stroke-width="1" stroke-dasharray="3 2.4"/><path d="M987.5 896 V901" stroke="#888" stroke-width="1.2"/><path d="M1096.5 700.9 V880.53" stroke="#a8a8a8" stroke-width="1" stroke-dasharray="3 2.4"/><path d="M1096.5 896 V901" stroke="#888" stroke-width="1.2"/><path d="M1204.5 700.9 V880.53" stroke="#a8a8a8" stroke-width="1" stroke-dasharray="3 2.4"/><path d="M1204.5 896 V901" stroke="#888" stroke-width="1.2"/><path d="M1313.5 700.9 V880.53" stroke="#a8a8a8" stroke-width="1" stroke-dasharray="3 2.4"/><path d="M1313.5 896 V901" stroke="#888" stroke-width="1.2"/><path d="M1422.5 700.9 V880.53" stroke="#a8a8a8" stroke-width="1" stroke-dasharray="3 2.4"/><path d="M1422.5 896 V901" stroke="#888" stroke-width="1.2"/><path d="M155.5 700.9 V881.03" stroke="#888" stroke-width="1.3"/><path d="M170.6 896 H1476.2" stroke="#aaa" stroke-width="1.5"/><rect x="158.2" y="711" width="9.2" height="152" fill="#e6e6e6"/><rect x="160" y="712.5" width="5.5" height="5" fill="#fff" stroke="#e6e6e6" stroke-width="0.5"/><rect x="160" y="856" width="5.5" height="5" fill="#fff"/><path d="M159.5 708.5 L162.8 705 L166 708.5Z" fill="#e8e8e8"/><path d="M159.5 864.5 L162.8 868 L166 864.5Z" fill="#e8e8e8"/><rect x="180" y="884.3" width="1290" height="9" fill="#e6e6e6"/><rect x="182" y="886" width="5" height="5.5" fill="#fff"/><rect x="1462" y="886" width="5" height="5.5" fill="#fff"/><path d="M178 885.5 L174.5 888.8 L178 892Z" fill="#e8e8e8"/><path d="M1471.5 885.5 L1475 888.8 L1471.5 892Z" fill="#e8e8e8"/><path d="M225.3 831.13175 H1422.1" stroke="#f2c21a" stroke-width="1.3" fill="none"/><path d="M225.3 837.2 L334.1 841.4 L442.9 848.5 L551.7 855.9 L660.5 761.3 L769.3 720.3 L878.1 728.4 L986.9 736.8 L1095.7 744.6 L1204.5 752.7 L1313.3 760.2 L1422.1 710.5" stroke="#4a6ff0" stroke-width="1.2" fill="none" stroke-linejoin="round"/><path d="M1503.7 702.2 H1524.5" stroke="#ee7a44" stroke-width="1.3"/><path d="M1503.7 726.2 H1524.5" stroke="#6aa84f" stroke-width="1.3"/><path d="M1503.7 750.5 H1524.5" stroke="#f5c518" stroke-width="1.3"/><path d="M1503.7 774.8 H1524.5" stroke="#4a6ff0" stroke-width="1.3"/></svg>
<div class="t" style="left:104.14px;top:693.70px;font-size:11px;line-height:14px;color:#777;letter-spacing:0.220px">160 000</div>
<div class="t" style="left:104.14px;top:710.03px;font-size:11px;line-height:14px;color:#777;letter-spacing:0.220px">140 000</div>
<div class="t" style="left:104.14px;top:726.36px;font-size:11px;line-height:14px;color:#777;letter-spacing:0.220px">120 000</div>
<div class="t" style="left:104.14px;top:742.69px;font-size:11px;line-height:14px;color:#777;letter-spacing:0.220px">100 000</div>
<div class="t" style="left:110.47px;top:759.02px;font-size:11px;line-height:14px;color:#777;letter-spacing:0.220px">80 000</div>
<div class="t" style="left:110.47px;top:775.35px;font-size:11px;line-height:14px;color:#777;letter-spacing:0.220px">60 000</div>
<div class="t" style="left:110.47px;top:791.68px;font-size:11px;line-height:14px;color:#777;letter-spacing:0.220px">40 000</div>
<div class="t" style="left:110.47px;top:808.01px;font-size:11px;line-height:14px;color:#777;letter-spacing:0.220px">20 000</div>
<div class="t" style="left:139.10px;top:824.34px;font-size:11px;line-height:14px;color:#777;letter-spacing:0.220px">0</div>
<div class="t" style="left:106.59px;top:840.67px;font-size:11px;line-height:14px;color:#777;letter-spacing:0.220px">-20 000</div>
<div class="t" style="left:106.59px;top:857.00px;font-size:11px;line-height:14px;color:#777;letter-spacing:0.220px">-40 000</div>
<div class="t" style="left:106.59px;top:873.33px;font-size:11px;line-height:14px;color:#777;letter-spacing:0.220px">-60 000</div>
<div class="t" style="left:203.30px;top:906.00px;font-size:11px;line-height:14px;color:#888;letter-spacing:0.601px">2024/01</div>
<div class="t" style="left:312.10px;top:906.00px;font-size:11px;line-height:14px;color:#888;letter-spacing:0.601px">2024/02</div>
<div class="t" style="left:420.90px;top:906.00px;font-size:11px;line-height:14px;color:#888;letter-spacing:0.593px">2024/03</div>
<div class="t" style="left:529.70px;top:906.00px;font-size:11px;line-height:14px;color:#888;letter-spacing:0.568px">2024/04</div>
<div class="t" style="left:638.50px;top:906.00px;font-size:11px;line-height:14px;color:#888;letter-spacing:0.584px">2024/05</div>
<div class="t" style="left:747.30px;top:906.00px;font-size:11px;line-height:14px;color:#888;letter-spacing:0.593px">2024/06</div>
<div class="t" style="left:856.10px;top:906.00px;font-size:11px;line-height:14px;color:#888;letter-spacing:0.601px">2024/07</div>
<div class="t" style="left:964.90px;top:906.00px;font-size:11px;line-height:14px;color:#888;letter-spacing:0.593px">2024/08</div>
<div class="t" style="left:1073.70px;top:906.00px;font-size:11px;line-height:14px;color:#888;letter-spacing:0.601px">2024/09</div>
<div class="t" style="left:1182.50px;top:906.00px;font-size:11px;line-height:14px;color:#888;letter-spacing:0.584px">2024/10</div>
<div class="t" style="left:1291.30px;top:906.00px;font-size:11px;line-height:14px;color:#888;letter-spacing:0.737px">2024/11</div>
<div class="t" style="left:1400.10px;top:906.00px;font-size:11px;line-height:14px;color:#888;letter-spacing:0.601px">2024/12</div>
<div class="t" style="left:71.6px;top:784px;font-size:11px;line-height:13px;color:#333;transform:rotate(-90deg);transform-origin:20px 6.5px;width:40px;text-align:center;letter-spacing:0.3px">Kwota</div>
<div class="t" style="left:1529.40px;top:695.40px;font-size:11px;line-height:14px;color:#222;letter-spacing:0.417px">Plan</div>
<div class="t" style="left:1530.00px;top:719.60px;font-size:11px;line-height:14px;color:#222;letter-spacing:0.208px">Zmiany</div>
<div class="t" style="left:1529.40px;top:743.80px;font-size:11px;line-height:14px;color:#222;letter-spacing:0.258px">PlanWyn</div>
<div class="t" style="left:1529.40px;top:768.00px;font-size:11px;line-height:14px;color:#222;letter-spacing:0.114px">Realizacja</div>
<div class="panel" style="left:1645.3px;top:78px;width:52px;height:872.3px;overflow:hidden">
<svg style="left:0;top:0" width="52" height="872" viewBox="0 0 52 872">
<path d="M0 652 Q20 643 52 643.5 V872 H0Z" fill="#f1f7fd"/>
<path d="M0 659 Q22 672 52 704 V872 H0Z" fill="#e7f2fb"/>
<path d="M0 789 Q25 792 52 800 V872 H0Z" fill="#e0eefa"/>
<path d="M0 655 Q20 645 52 646" stroke="#a6cdef" stroke-width="1" stroke-dasharray="3 2.5" fill="none"/>
<path d="M0 792 Q25 784 52 768" stroke="#a6cdef" stroke-width="1" stroke-dasharray="3 2.5" fill="none"/></svg>
</div>
<svg style="left:1660px;top:429.5px" width="26" height="24" viewBox="0 0 26 24" fill="none" stroke="#1f8ad6" stroke-width="1.5" stroke-linecap="round">
<path d="M11.1 19.6 A7.3 7.3 0 1 1 17 19 Q14.5 20.2 13.4 22.6"/><path d="M13.1 0.6 V3.2 M3.8 4.5 L5.4 5.9 M22.5 4.5 L21.1 5.9 M0.9 12.8 H3 M22.6 12.8 H24.8"/></svg>
<svg style="left:1660px;top:477px" width="26" height="26" viewBox="0 0 26 26" fill="none" stroke-width="1.2" stroke-linejoin="round">
<path d="M25.2 9.9 V1.4 H1.3 V17.6 L3.2 21.5 L8.2 18.8" stroke="#555"/><rect x="12.2" y="13.4" width="13" height="9" rx="2" stroke="#1f8ad6" fill="#fff"/><path d="M21 22.4 L23.8 25 V22.4" stroke="#1f8ad6"/><path d="M15.2 18 H16.4 M18.2 18 H19.4 M21.2 18 H22.4" stroke="#1f8ad6"/></svg>
<svg style="left:1660px;top:527px" width="26" height="25" viewBox="0 0 26 25" fill="none" stroke-width="1.2" stroke-linejoin="round">
<path d="M2.3 8.2 V0.7 H25.2 V17.8 L23.4 20.6 L17.8 16.6" stroke="#555"/><circle cx="7.9" cy="16.4" r="7.2" stroke="#1f8ad6" fill="#fff"/><path d="M5.7 14.3 Q5.7 11.7 7.9 11.7 Q10.1 11.7 10.1 13.7 Q10.1 15 8.9 15.7 Q7.9 16.3 7.9 17.9" stroke="#1f8ad6" stroke-width="1.1"/><circle cx="7.9" cy="20.1" r="0.65" fill="#1f8ad6" stroke="none"/></svg>
<svg style="left:1660px;top:576.5px" width="26" height="24" viewBox="0 0 26 24" fill="none" stroke-width="1.15" stroke-linejoin="round">
<path d="M8.6 5.2 V0.7 H25.2 V10.9 H20.2 L17 14.2 V10.9 H15.5" stroke="#1f8ad6"/><path d="M14 6 H15.3 M17.2 6 H18.5 M20.4 6 H21.7" stroke="#1f8ad6"/>
<path d="M7.5 11.5 Q6.5 9 4.8 9.6 Q2.6 10.4 3.6 13.6 Q4 14.8 4.6 15.3 Q1 16.2 0.6 19.6 H3.5" stroke="#555"/>
<path d="M11.2 9.3 Q8 9.3 8 13 Q8 15.6 9.6 16.8 Q4.8 17.8 4.6 22.8 H17.8 Q17.6 17.8 12.8 16.8 Q14.4 15.6 14.4 13 Q14.4 9.3 11.2 9.3 Z" stroke="#555" fill="#fff"/></svg>
</div></body></html>
